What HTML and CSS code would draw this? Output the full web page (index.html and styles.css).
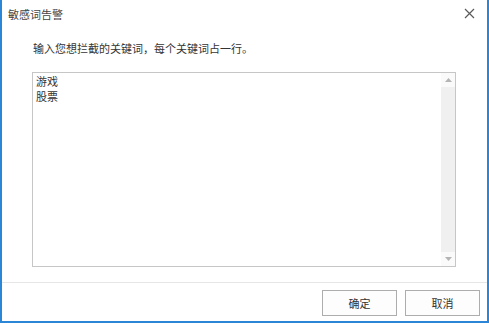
FILE: index.html
```html
<!DOCTYPE html>
<html lang="zh-CN">
<head>
    <meta charset="UTF-8">
    <title>敏感词告警</title>
    <link rel="stylesheet" href="styles.css">
</head>
<body>

<div class="window">
    <div class="titlebar">
        <span class="title">敏感词告警</span>
        <svg class="close" width="11" height="11" viewBox="0 0 11 11">
            <path d="M1 1 L10 10 M10 1 L1 10" stroke="#5a5a5a" stroke-width="1.2" fill="none"/>
        </svg>
    </div>
    <div class="content">
        <div class="hint">输入您想拦截的关键词，每个关键词占一行。</div>
        <div class="editor">
            <div class="lines">
                <div class="line">游戏</div>
                <div class="line">股票</div>
            </div>
            <div class="scroll">
                <div class="arrow"><svg width="7" height="4" viewBox="0 0 7 4"><path d="M0 4 L3.5 0 L7 4 Z" fill="#b4b4b4"/></svg></div>
                <div class="track"></div>
                <div class="arrow"><svg width="7" height="4" viewBox="0 0 7 4"><path d="M0 0 L3.5 4 L7 0 Z" fill="#b4b4b4"/></svg></div>
            </div>
        </div>
    </div>
    <div class="footer">
        <button class="btn">确定</button>
        <button class="btn">取消</button>
    </div>
</div>

</body>
</html>
```
FILE: styles.css
```css
body {
    margin: 0;
    font-family: "Noto Sans CJK SC", "Liberation Sans", sans-serif;
    font-size: 11px;
    color: #333;
    background: #fff;
}
.window {
    width: 489px;
    height: 323px;
    box-sizing: border-box;
    border: 2px solid #2b86d8;
    border-top: none;
    display: flex;
    flex-direction: column;
    background: #fff;
}
.titlebar {
    height: 27px;
    display: flex;
    align-items: center;
    justify-content: space-between;
    padding: 0 12px 0 6px;
}
.title {
    color: #444;
    line-height: 16px;
}
.close {
    display: block;
}
.content {
    flex: 1;
    padding: 13px 0 0 31px;
}
.hint {
    line-height: 16px;
}
.editor {
    margin-top: 16px;
    width: 424px;
    height: 195px;
    margin-left: -1px;
    box-sizing: border-box;
    border: 1px solid #c6c6c6;
    display: flex;
}
.lines {
    flex: 1;
    padding: 1px 3px;
    color: #333;
}
.line {
    height: 15px;
    line-height: 15px;
}
.scroll {
    width: 14px;
    background: #f0f0f0;
    display: flex;
    flex-direction: column;
}
.arrow {
    height: 14px;
    display: flex;
    align-items: center;
    justify-content: center;
    background: #fafafa;
}
.track {
    flex: 1;
}
.footer {
    height: 39px;
    box-sizing: border-box;
    border-top: 1px solid #e6e6e6;
    display: flex;
    justify-content: flex-end;
    align-items: flex-start;
    gap: 8px;
    padding: 7px 7px 0 0;
}
.btn {
    width: 75px;
    height: 26px;
    border: 1px solid #adadad;
    background: #fdfdfd;
    font-family: inherit;
    font-size: 11px;
    color: #333;
    padding: 0;
}
```
